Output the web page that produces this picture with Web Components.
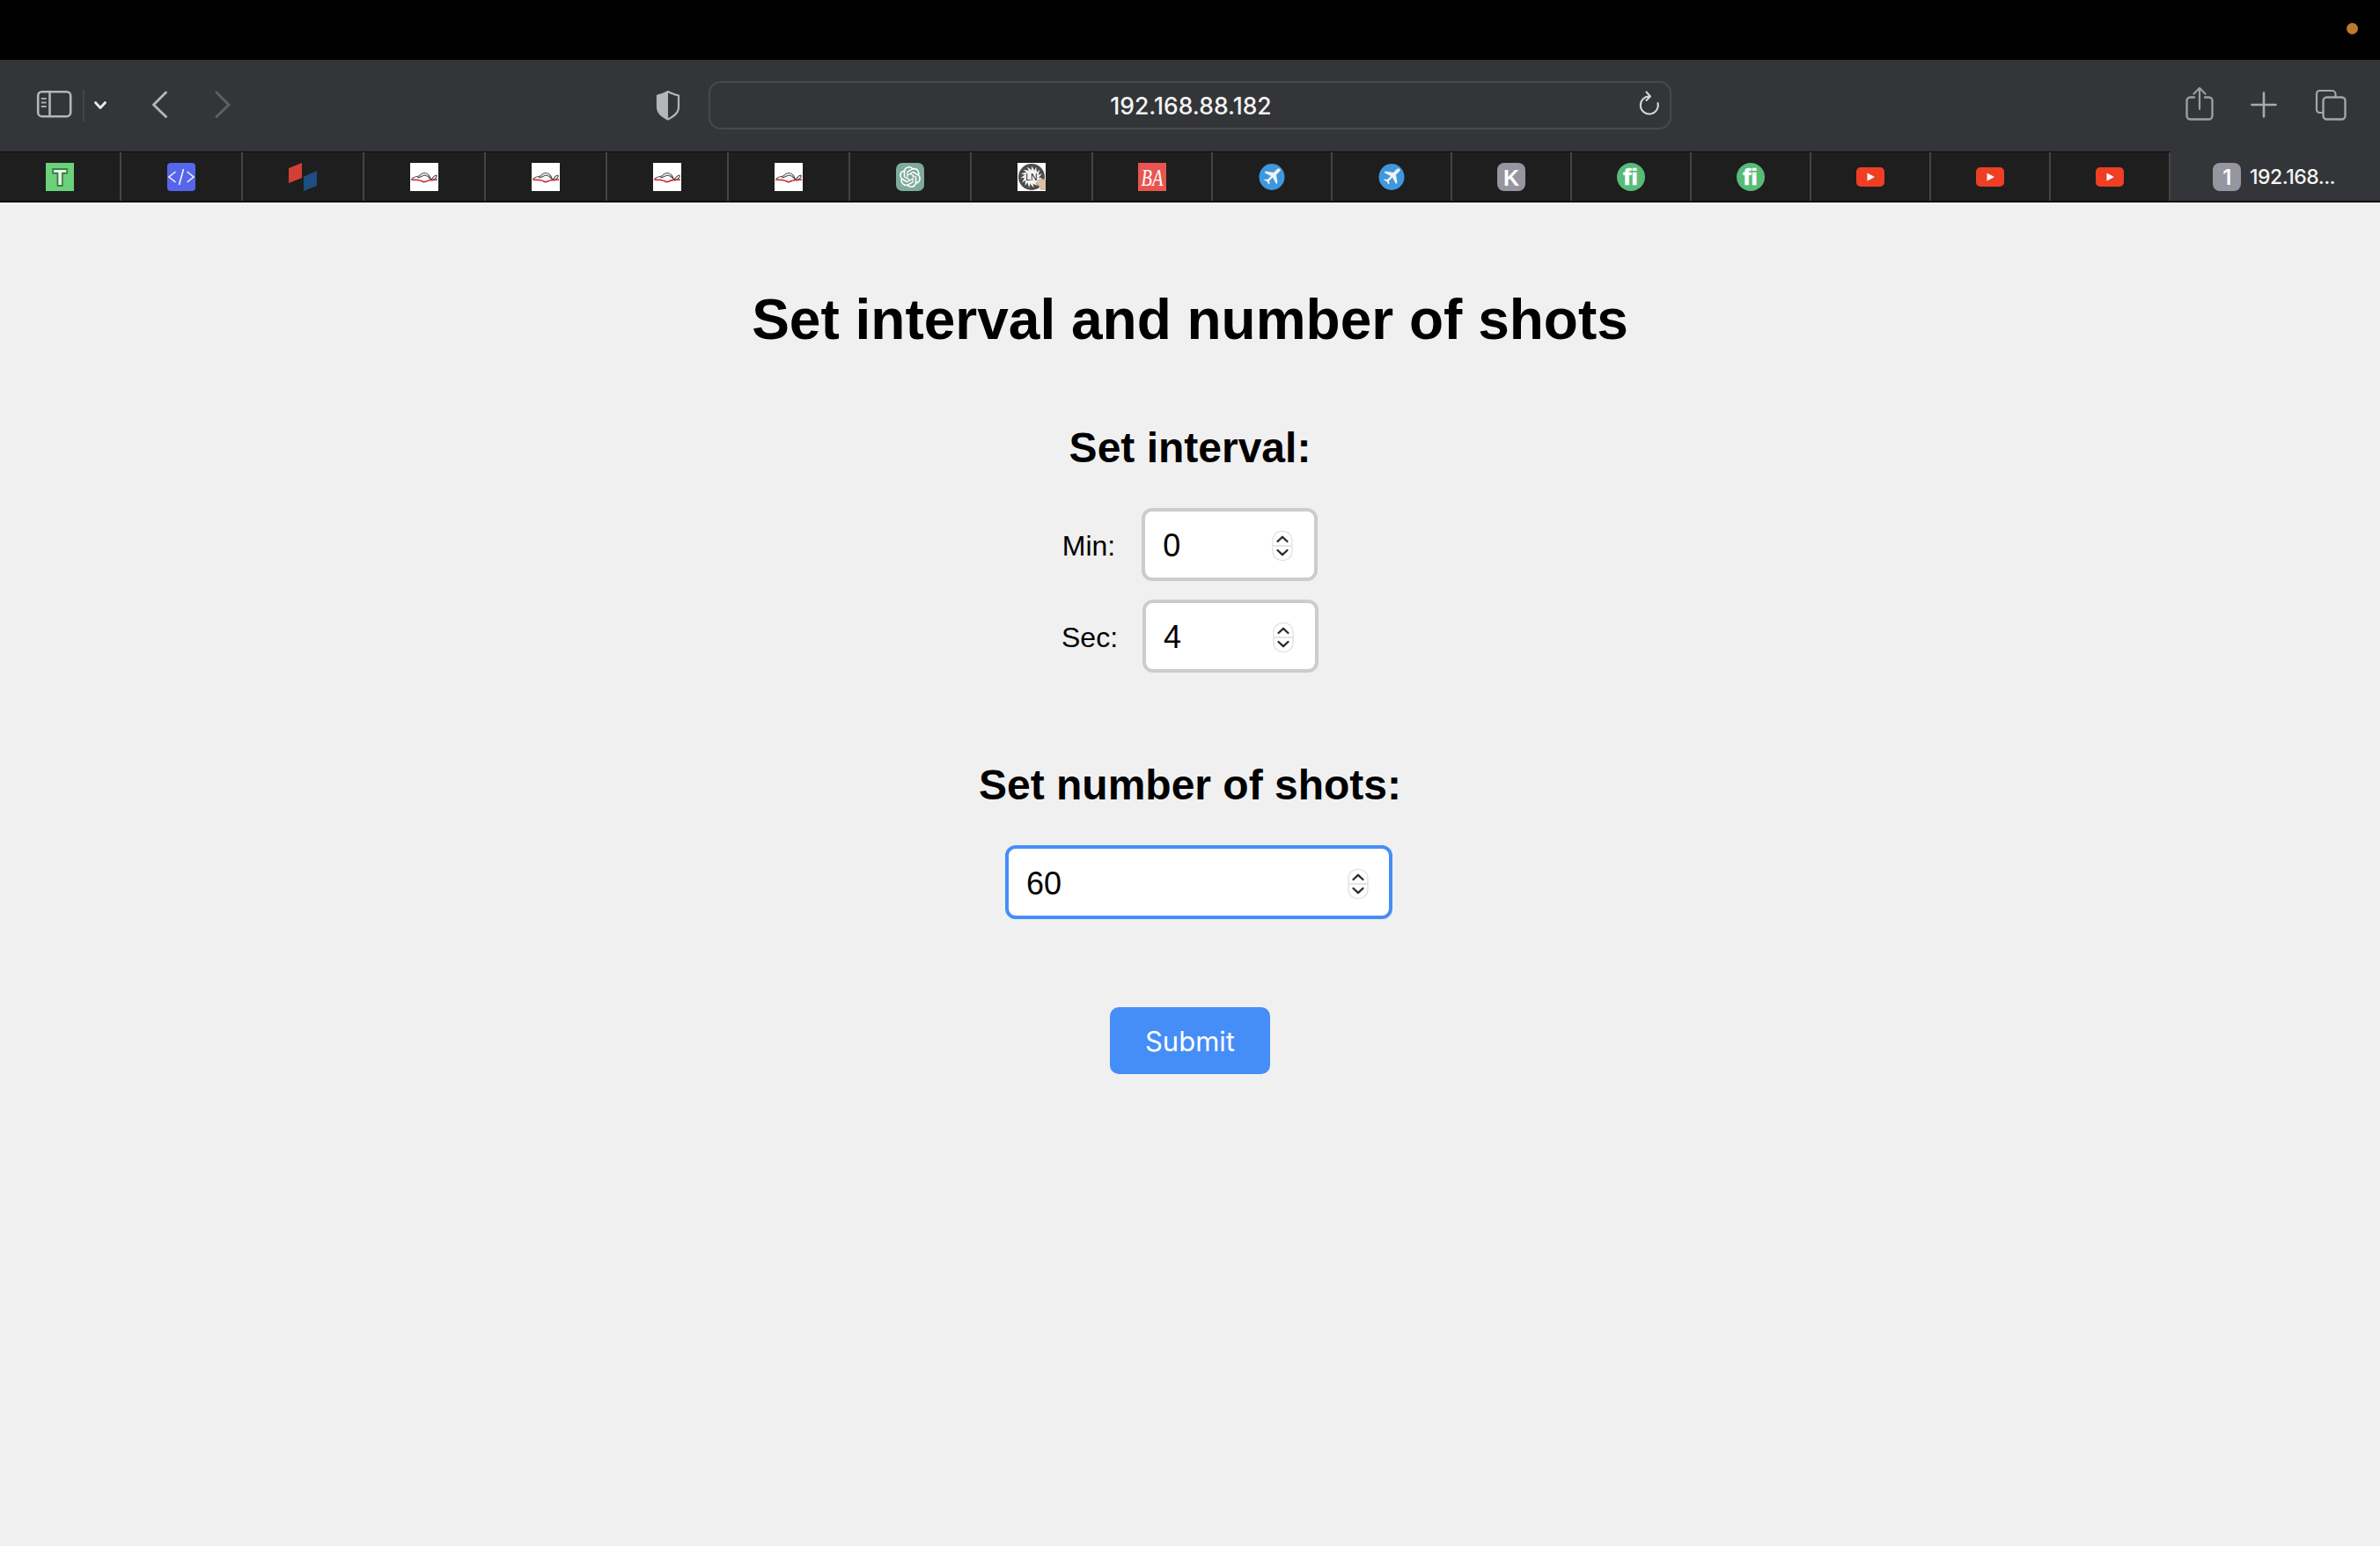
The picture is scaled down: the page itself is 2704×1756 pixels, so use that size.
<!DOCTYPE html>
<html lang="en"><head><meta charset="utf-8"><title>192.168.88.182</title>
<style>html,body{margin:0;padding:0;background:#f0f0f0}body{width:2704px;height:1756px;overflow:hidden;font-family:"Liberation Sans",Arial,sans-serif}</style>
</head><body>
<browser-window>
  <browser-toolbar slot="chrome" address="192.168.88.182"></browser-toolbar>
  <tab-strip slot="chrome">
    <fav-tab icon="t"></fav-tab><fav-tab icon="code"></fav-tab><fav-tab icon="blocks"></fav-tab>
    <fav-tab icon="book"></fav-tab><fav-tab icon="book"></fav-tab><fav-tab icon="book"></fav-tab><fav-tab icon="book"></fav-tab>
    <fav-tab icon="gpt"></fav-tab><fav-tab icon="ln"></fav-tab>
    <fav-tab icon="ba" narrow></fav-tab><fav-tab icon="plane" narrow></fav-tab><fav-tab icon="plane" narrow></fav-tab><fav-tab icon="k" narrow></fav-tab>
    <fav-tab icon="fi" narrow></fav-tab><fav-tab icon="fi" narrow></fav-tab>
    <fav-tab icon="yt" narrow></fav-tab><fav-tab icon="yt" narrow></fav-tab><fav-tab icon="yt" narrow></fav-tab>
    <active-tab badge="1">192.168...</active-tab>
  </tab-strip>
  <shot-form>
    <form-title>Set interval and number of shots</form-title>
    <section-title style="--mt:81px">Set interval:</section-title>
    <labeled-row label="Min:" value="0" style="--mt:40px;--gap:30px"></labeled-row>
    <labeled-row label="Sec:" value="4" style="--mt:21px;--gap:28px"></labeled-row>
    <section-title style="--mt:100px">Set number of shots:</section-title>
    <num-field value="60" focused style="--w:440px;--h:84px;--pr:23px;margin:40px 0 0 20px"></num-field>
    <submit-button>Submit</submit-button>
  </shot-form>
</browser-window>
<script>
const def=(name,css,html)=>{customElements.define(name,class extends HTMLElement{
  constructor(){super();const r=this.attachShadow({mode:"open"});
    const h=typeof html==="function"?html(this):html;
    r.innerHTML=`<style>${css}</style>${h}`;}
});};

def("browser-window",
`:host{display:flex;flex-direction:column;width:2704px;height:1756px;background:#f0f0f0}
 .top{height:68px;background:#000;display:flex;justify-content:flex-end;align-items:center;padding-right:25px;box-sizing:border-box}
 .dot{width:13px;height:13px;border-radius:50%;background:#bd7a2a;margin-top:-4px}`,
`<div class="top"><div class="dot"></div></div><slot name="chrome"></slot><slot></slot>`);

const S=(x,w,inner)=>`<svg width="${w}" height="104" viewBox="${x} 68 ${w} 104" fill="none" stroke-linecap="round" stroke-linejoin="round">${inner}</svg>`;
def("browser-toolbar",
`:host{display:grid;grid-template-columns:805px 1094px 805px;height:104px;background:#333538;align-items:center}
 svg{display:block;flex:none}
 .left{display:flex;padding-left:40px}
 .right{display:flex;justify-content:flex-end;padding-right:36px}
 .bar{height:55px;box-sizing:border-box;border:2px solid #48494c;border-radius:14px;display:grid;grid-template-columns:1fr auto 1fr;align-items:center;margin-top:-1px}
 .url{font:500 26.5px Inter,"Liberation Sans",sans-serif;color:#f4f4f4;line-height:1;position:relative;top:1px;left:1px}
 .rl{justify-self:end;margin-right:10px;margin-top:-3px}`,
h=>`<div class="left">
 ${S(40,85,`<rect x="43.2" y="104.2" width="37" height="28" rx="4.5" stroke="#b4b5b6" stroke-width="2.6"/><path d="M56.5 104v28" stroke="#b4b5b6" stroke-width="2.6"/><path d="M47.5 112h4.5M47.5 116.5h4.5M47.5 121h4.5" stroke="#a8a9aa" stroke-width="1.8"/><path d="M95 102v36" stroke="#4b4c4e" stroke-width="1.6" stroke-linecap="butt"/><path d="M108.5 116.500l5.500 6 5.500-6" stroke="#ececec" stroke-width="2.800"/>`)}
 <span style="width:45px;flex:none"></span>${S(170,24,`<path d="M188.500 105L174.500 119l14 13.500" stroke="#b3b4b5" stroke-width="3"/>`)}
 <span style="width:46px;flex:none"></span>${S(240,24,`<path d="M246 105l14 14-14 13.500" stroke="#5f6062" stroke-width="3"/>`)}
 <span style="width:478px;flex:none"></span>${S(742,34,`<path d="M759 104c-4.500 2.500-8 4-12 4.500v13c0 7.500 6.500 11 12 14 5.500-3 12-6.500 12-14v-13c-4-.5-7.500-2-12-4.500z" stroke="#b5b6b7" stroke-width="2.200"/><path d="M759 104c-4.500 2.500-8 4-12 4.500v13c0 7.500 6.500 11 12 14z" fill="#b5b6b7"/>`)}
 </div>
 <div class="bar"><span></span><span class="url">${h.getAttribute("address")}</span>
  <svg class="rl" width="28" height="34" viewBox="1860 102 28 34" fill="none" stroke="#d8d8d8" stroke-width="2" stroke-linecap="round" stroke-linejoin="round"><path d="M1875 110.500A10 10 0 1 0 1884.500 118"/><path d="M1871.500 105.500l4.500 5-4.500 4.500"/></svg></div>
 <div class="right">
 ${S(2480,38,`<path d="M2493 110.500h-4.500a4 4 0 0 0-4 4V131.500a4 4 0 0 0 4 4h21a4 4 0 0 0 4-4V114.500a4 4 0 0 0-4-4H2505" stroke="#9d9ea0" stroke-width="2.400"/><path d="M2499 124V100M2492.500 106.500L2499 100l6.500 6.500" stroke="#9d9ea0" stroke-width="2.200"/>`)}
 <span style="width:38px;flex:none"></span>${S(2556,32,`<path d="M2572 105.500v27M2558.500 119h27" stroke="#a9aaab" stroke-width="2.600"/>`)}
 <span style="width:41px;flex:none"></span>${S(2629,39,`<path d="M2639 128h-3.500a3.500 3.500 0 0 1-3.500-3.500V106.500a3.500 3.500 0 0 1 3.500-3.500h14a4 4 0 0 1 4 4v3" stroke="#a5a6a8" stroke-width="2.200"/><rect x="2639.500" y="110.500" width="25" height="25" rx="4" stroke="#a5a6a8" stroke-width="2.400"/>`)}
 </div>`);

def("tab-strip",
`:host{display:flex;height:58px;background:#1e1e1e;border-top:1px solid #0d0d0d;border-bottom:2px solid #0d0d0d;box-sizing:border-box}`,
`<slot></slot>`);

const GPT="M22.2819 9.8211a5.9847 5.9847 0 0 0-.5157-4.9108 6.0462 6.0462 0 0 0-6.5098-2.9A6.0651 6.0651 0 0 0 4.9807 4.1818a5.9847 5.9847 0 0 0-3.9977 2.9 6.0462 6.0462 0 0 0 .7427 7.0966 5.98 5.98 0 0 0 .511 4.9107 6.051 6.051 0 0 0 6.5146 2.9001A5.9847 5.9847 0 0 0 13.2599 24a6.0557 6.0557 0 0 0 5.7718-4.2058 5.9894 5.9894 0 0 0 3.9977-2.9001 6.0557 6.0557 0 0 0-.7475-7.0729zm-9.022 12.6081a4.4755 4.4755 0 0 1-2.8764-1.0408l.1419-.0804 4.7783-2.7582a.7948.7948 0 0 0 .3927-.6813v-6.7369l2.02 1.1686a.071.071 0 0 1 .038.052v5.5826a4.504 4.504 0 0 1-4.4945 4.4944zm-9.6607-4.1254a4.4708 4.4708 0 0 1-.5346-3.0137l.142.0852 4.783 2.7582a.7712.7712 0 0 0 .7806 0l5.8428-3.3685v2.3324a.0804.0804 0 0 1-.0332.0615L9.74 19.9502a4.4992 4.4992 0 0 1-6.1408-1.6464zM2.3408 7.8956a4.485 4.485 0 0 1 2.3655-1.9728V11.6a.7664.7664 0 0 0 .3879.6765l5.8144 3.3543-2.0201 1.1685a.0757.0757 0 0 1-.071 0l-4.8303-2.7865A4.504 4.504 0 0 1 2.3408 7.872zm16.5963 3.8558L13.1038 8.364 15.1192 7.2a.0757.0757 0 0 1 .071 0l4.8303 2.7913a4.4944 4.4944 0 0 1-.6765 8.1042v-5.6772a.79.79 0 0 0-.407-.667zm2.0107-3.0231l-.142-.0852-4.7735-2.7818a.7759.7759 0 0 0-.7854 0L9.409 9.2297V6.8974a.0662.0662 0 0 1 .0284-.0615l4.8303-2.7866a4.4992 4.4992 0 0 1 6.6802 4.66zM8.3065 12.863l-2.02-1.1638a.0804.0804 0 0 1-.038-.0567V6.0742a4.4992 4.4992 0 0 1 7.3757-3.4537l-.142.0805L8.704 5.459a.7948.7948 0 0 0-.3927.6813zm1.0976-2.3654l2.602-1.4998 2.6069 1.4998v2.9994l-2.5974 1.4997-2.6067-1.4997Z";
let blades="";for(let a=0;a<360;a+=24)blades+=`<path d="M16 3.500L19.500 9 16 10z" fill="#f2f2f2" transform="rotate(${a} 16 16)"/>`;
const ICONS={
 t:`<rect width="32" height="32" fill="#6bd17a"/><text x="16" y="25" text-anchor="middle" font-family="Liberation Sans" font-weight="700" font-size="24" fill="#f0f5ee" stroke="#2f7a3a" stroke-width="3.500" paint-order="stroke">T</text>`,
 code:`<rect width="32" height="32" rx="4" fill="#5566ea"/><path d="M9.500 10L2 16l7.500 6M22.500 10L30 16l-7.500 6M18.500 7l-5 18" fill="none" stroke="#f2f4ff" stroke-width="1.600"/>`,
 blocks:`<path d="M0 6L15 0v17L0 23z" fill="#d43f33"/><path d="M17 15.500L32 9v17l-15 6z" fill="#1e4d80"/>`,
 book:`<rect width="32" height="32" fill="#fff"/><path d="M2 18c3-3 6-2 8-3 3-4 8-5 11-1 2 2 2 5 3 5 2-2 3-5 6-5 1 2-2 5-5 6-2 0-3-5-8-6-3 0-5 3-9 3" fill="none" stroke="#4a4a4a" stroke-width="1.100"/><path d="M1 19c5 0 9 0 13 2 1 1 2 1 4 0 4-2 8-2 13-2" fill="none" stroke="#c9252f" stroke-width="1.700"/>`,
 gpt:`<rect width="32" height="32" rx="7" fill="#7fab9b"/><path d="${GPT}" fill="#fff" transform="translate(4 4)"/>`,
 ln:`<rect width="32" height="32" fill="#fff"/><circle cx="16" cy="16" r="15" fill="#4c4c4e"/>${blades}<circle cx="16" cy="16" r="7.500" fill="#f4f4f4"/><text x="16" y="20" text-anchor="middle" font-family="Liberation Sans" font-size="10.500" fill="#222">LN</text><path d="M21 22l5-4 6 1v12h-6l-2-5z" fill="#d9bfa6"/>`,
 ba:`<rect width="32" height="32" fill="#e85550"/><text transform="translate(16 26) scale(.85 1.15)" text-anchor="middle" font-family="Liberation Serif" font-style="italic" font-size="24" fill="#fff">BA</text>`,
 plane:`<ellipse cx="16" cy="16" rx="14.500" ry="15" fill="#3f97de"/><path d="M24.500 6.500c1.500 0 1.500 2 .5 3l-4 4 1.500 9-1.500 1.500-4-7.500-4 4 .5 3-1 1-2-3.500L7 19.500l1-1 3 .5 4-4-7.500-4L9 9.500l9 1.500 4-4c.7-.4 1.700-.5 2.500-.5z" fill="#f2f2f2"/>`,
 k:`<rect width="32" height="32" rx="8" fill="#9696a0"/><text x="16" y="26" text-anchor="middle" font-family="Liberation Sans" font-weight="700" font-size="25" fill="#fff">K</text>`,
 fi:`<circle cx="16" cy="16" r="16" fill="#58bb7a"/><text x="15.500" y="25" text-anchor="middle" font-family="Liberation Sans" font-weight="700" font-size="25" fill="#fff" stroke="#fff" stroke-width=".6" textLength="17" lengthAdjust="spacingAndGlyphs">fi</text>`,
 yt:`<rect x="0" y="5" width="32" height="22" rx="5" fill="#ee3e24"/><path d="M12.500 11.500L21 16l-8.500 4.500z" fill="#fff"/>`
};
def("fav-tab",
`:host{flex:none;width:138px;box-sizing:border-box;border-right:2px solid #444;display:flex;align-items:center;justify-content:center}
 :host([narrow]){width:136px}
 svg{display:block;margin-top:1px}`,
h=>`<svg width="32" height="32" viewBox="0 0 32 32">${ICONS[h.getAttribute("icon")]}</svg>`);

def("active-tab",
`:host{flex:1;background:#333538;margin-top:-1px;display:flex;align-items:center;padding-left:48px;color:#f4f4f4;font:500 23px Inter,"Liberation Sans",sans-serif;letter-spacing:-.5px}
 .b{width:32px;height:32px;border-radius:8px;background:#9596a0;display:flex;align-items:center;justify-content:center;font-size:24px;font-weight:600;color:#fff;margin-right:10px;margin-top:2px}
 span.t{margin-top:1px}`,
h=>`<span class="b">${h.getAttribute("badge")}</span><span class="t"><slot></slot></span>`);

def("shot-form",
`:host{display:flex;flex-direction:column;align-items:center;background:#f0f0f0;color:#000;font-family:"Liberation Sans",Arial,sans-serif}`,
`<slot></slot>`);
def("form-title",
`:host{display:block;margin-top:96px;font:700 64px/74px "Liberation Sans",Arial,sans-serif;text-align:center}`,`<slot></slot>`);
def("section-title",
`:host{display:block;margin-top:var(--mt,0);font:700 48px/56px "Liberation Sans",Arial,sans-serif;text-align:center}`,`<slot></slot>`);

def("num-field",
`:host{display:flex;align-items:center;justify-content:space-between;flex:none;box-sizing:border-box;width:var(--w,200px);height:var(--h,83px);background:#fff;border:4px solid #ccc;border-radius:12px;padding:3px var(--pr,24px) 0 20px;font:36px "Liberation Sans",Arial,sans-serif;color:#000}
 :host([focused]){border-color:#458ef7}
 svg{display:block;flex:none}`,
h=>`<span>${h.getAttribute("value")}</span><svg width="24" height="36" viewBox="0 0 24 36" fill="none"><rect x="1" y="1.500" width="22" height="33" rx="10" fill="#fff" stroke="#dedede" stroke-width="1.200"/><path d="M1 18h22" stroke="#dcdcdc" stroke-width="1.500"/><path d="M6.500 13L12 7.800l5.500 5.200M6.500 23L12 28.200l5.500-5.200" stroke="#2b2b2b" stroke-width="2.300" stroke-linecap="round" stroke-linejoin="round"/></svg>`);

def("labeled-row",
`:host{display:flex;align-items:center;justify-content:center;margin-top:var(--mt,0);font:32px "Liberation Sans",Arial,sans-serif}
 label{margin-right:var(--gap);padding-top:3px}`,
h=>`<label>${h.getAttribute("label")}</label><num-field value="${h.getAttribute("value")}"></num-field>`);

def("submit-button",
`:host{display:flex;align-items:center;justify-content:center;box-sizing:border-box;width:182px;height:76px;margin-top:100px;border-radius:10px;background:#468ef7;color:#fff;font:400 31px Inter,"Liberation Sans",sans-serif}`,
`<slot></slot>`);
</script>
</body></html>
